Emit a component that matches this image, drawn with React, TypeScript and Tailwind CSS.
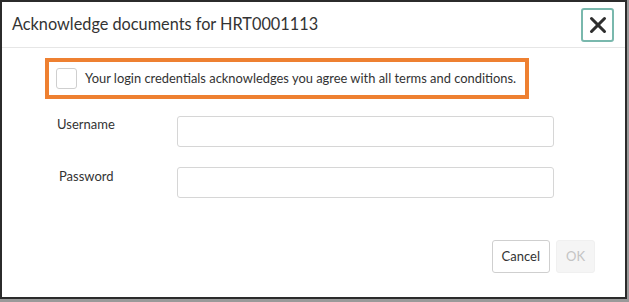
import { X } from 'lucide-react';

function FieldRow({ label, type, labelClass }: { label: string; type: string; labelClass: string }) {
  return (
    <div className="flex items-center">
      <label className={`w-[132px] text-[13px] text-[#333] ${labelClass}`}>{label}</label>
      <input
        type={type}
        className="h-[31px] w-[377px] rounded-[3px] border border-[#d6d6d6] bg-white px-2 text-[13px] outline-none"
      />
    </div>
  );
}

export default function App() {
  return (
    <div className="h-[302px] w-[629px] bg-[#9a9a9a] font-['Lato',sans-serif]">
      <div className="flex h-[299px] w-[627px] flex-col border-2 border-[#2b2b2b] bg-white">
        <header className="flex h-[46px] items-center justify-between border-b border-[#e6e6e6] pl-[10px] pr-[11px]">
          <h1 className="text-[16.3px] text-[#333]">Acknowledge documents for HRT0001113</h1>
          <button
            type="button"
            aria-label="Close"
            className="flex h-[34px] w-[33px] items-center justify-center rounded-[3px] border-2 border-[#79b8ad] bg-white"
          >
            <X className="h-[26px] w-[26px] text-[#2e2e2e]" strokeWidth={2.8} />
          </button>
        </header>
        <div className="flex flex-col pl-[43px] pt-[10px]">
          <label className="flex h-[41px] w-[484px] items-center gap-[8px] border-[4px] border-[#ee8031] pl-[7px]">
            <span className="h-[21px] w-[21px] rounded-[3px] border border-[#cfcfcf] bg-white" />
            <span className="text-[12.9px] text-[#333]">
              Your login credentials acknowledges you agree with all terms and conditions.
            </span>
          </label>
          <div className="mt-[17px] flex flex-col gap-[20px]">
            <FieldRow label="Username" type="text" labelClass="pl-[12px] -mt-[14px]" />
            <FieldRow label="Password" type="password" labelClass="pl-[14px] -mt-[12px]" />
          </div>
        </div>
        <div className="mt-auto flex justify-end gap-[6px] pb-[24px] pr-[30px]">
          <button
            type="button"
            className="h-[33px] rounded-[3px] border border-[#cfcfcf] bg-white px-[9px] text-[13px] text-[#333]"
          >
            Cancel
          </button>
          <button
            type="button"
            disabled
            className="h-[33px] rounded-[3px] border border-[#f0f0f0] bg-[#f5f5f5] px-[9px] text-[13px] text-[#c4c4c4]"
          >
            OK
          </button>
        </div>
      </div>
    </div>
  );
}
